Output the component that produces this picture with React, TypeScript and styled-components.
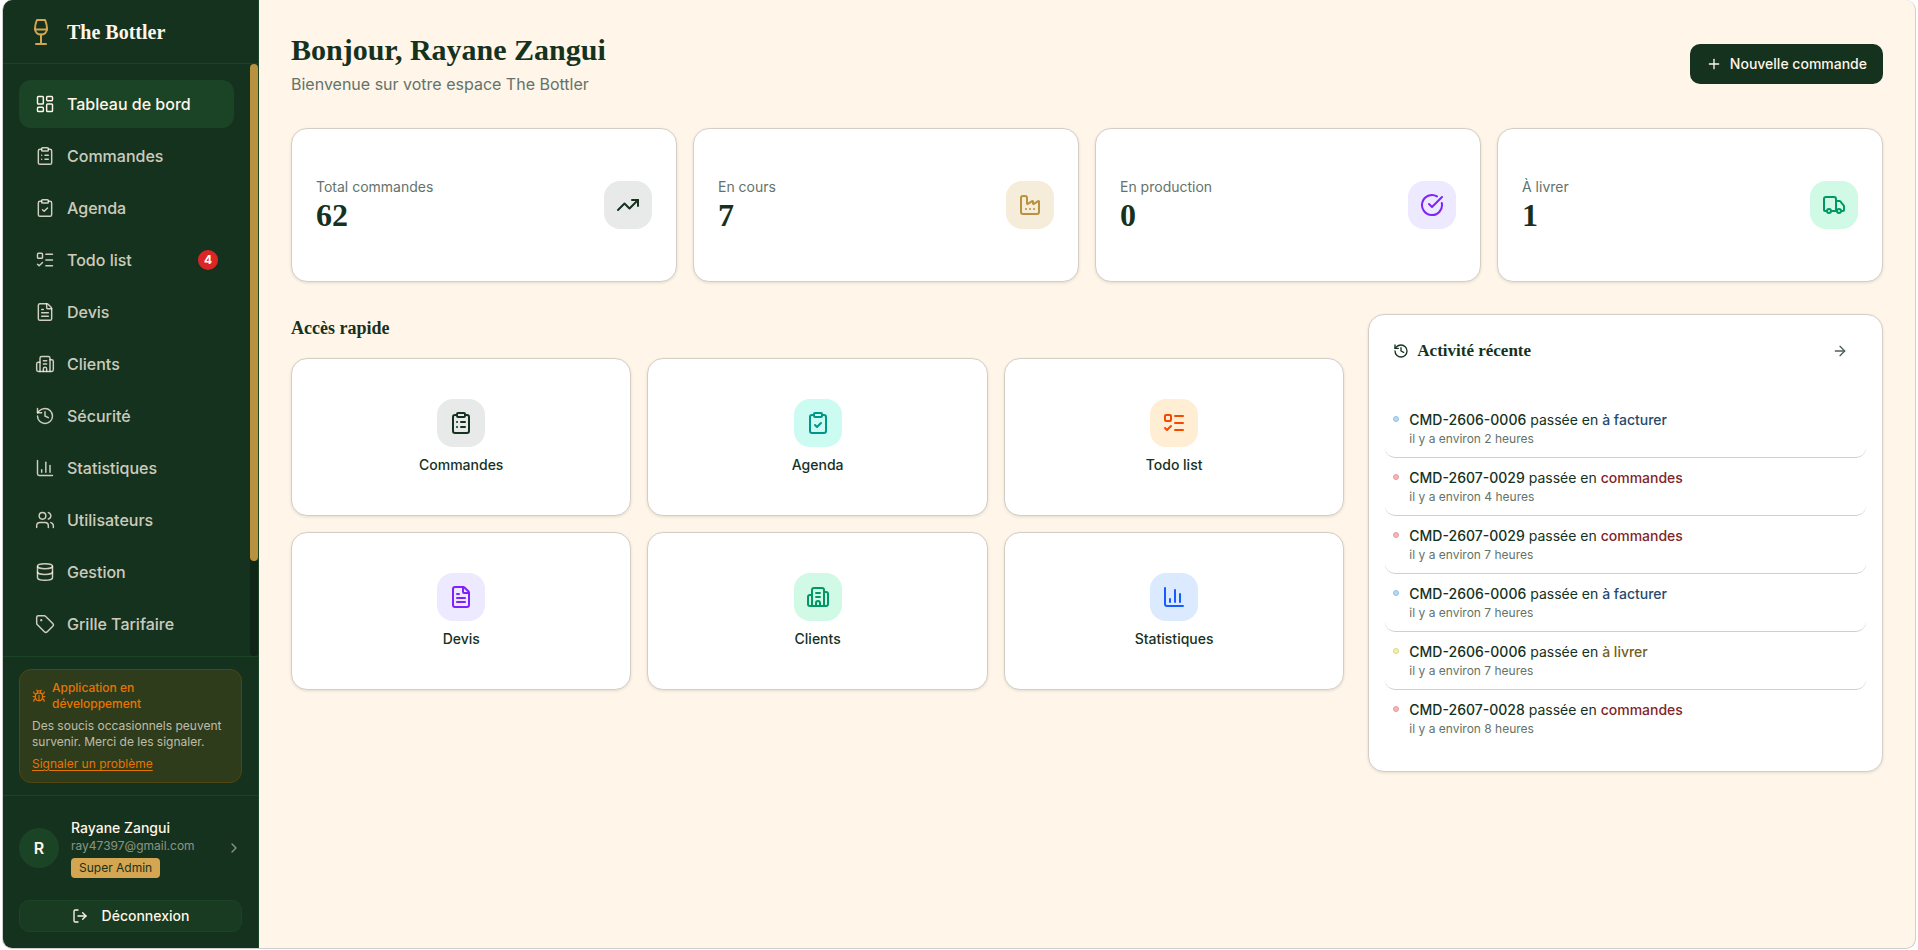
import React from "react";
import styled, { createGlobalStyle, ThemeProvider } from "styled-components";
import {
  ArrowRight,
  Bug,
  ChartColumn,
  ChevronRight,
  CircleCheckBig,
  ClipboardCheck,
  ClipboardList,
  Database,
  Factory,
  FileText,
  History,
  LayoutDashboard,
  ListTodo,
  LogOut,
  Plus,
  Tag,
  TrendingUp,
  Truck,
  Users,
  type LucideIcon,
} from "lucide-react";

const theme = {
  green: "#15321e",
  greenSoft: "#1b4426",
  cream: "#fff5e8",
  gold: "#b8923f",
  goldLight: "#d4a651",
  orange: "#e87400",
  muted: "#63736a",
  border: "#d3cfc7",
  sans: '"Inter", "Liberation Sans", sans-serif',
  serif: '"Liberation Serif", "Times New Roman", serif',
};

const GlobalStyle = createGlobalStyle`
  *, *::before, *::after { box-sizing: border-box; }
  body {
    margin: 0;
    background: #fff;
    color: ${theme.green};
    font-family: ${theme.sans};
    font-size: 14px;
    line-height: 20px;
  }
  h1, h2, p, ul { margin: 0; padding: 0; }
  ul { list-style: none; }
  a { color: inherit; text-decoration: none; }
  button { font: inherit; cursor: pointer; }
  svg { display: block; flex-shrink: 0; }
`;

const Frame = styled.div`
  display: flex;
  min-height: calc(100vh - 1px);
  margin: 0 2px 1px;
  border: 1px solid #cfcfcf;
  border-top: 0;
  border-radius: 10px;
  overflow: hidden;
  background: ${(p) => p.theme.cream};
`;

/* ---------- Sidebar ---------- */

const Sidebar = styled.aside`
  display: flex;
  flex-direction: column;
  flex: 0 0 256px;
  height: calc(100vh - 2px);
  border-right: 1px solid ${(p) => p.theme.greenSoft};
  background: ${(p) => p.theme.green};
  color: ${(p) => p.theme.cream};
`;

const Brand = styled.div`
  display: flex;
  align-items: center;
  gap: 12px;
  flex: 0 0 64px;
  padding: 0 24px;
  border-bottom: 1px solid ${(p) => p.theme.greenSoft};
  color: ${(p) => p.theme.goldLight};
`;

const BrandName = styled.span`
  color: ${(p) => p.theme.cream};
  font: 700 20px/28px ${(p) => p.theme.serif};
`;

const NavArea = styled.div`
  display: flex;
  flex: 1;
  min-height: 0;
`;

const Nav = styled.nav`
  flex: 1;
  padding: 16px;
  overflow: hidden;
`;

const NavList = styled.ul`
  display: flex;
  flex-direction: column;
  gap: 4px;
`;

const NavLink = styled.a<{ $active?: boolean }>`
  display: flex;
  align-items: center;
  gap: 12px;
  height: 48px;
  padding: 0 16px;
  border-radius: 12px;
  font-size: 16px;
  font-weight: 500;
  color: ${(p) => (p.$active ? p.theme.cream : "rgba(255, 245, 232, 0.8)")};
  background: ${(p) => (p.$active ? p.theme.greenSoft : "transparent")};
`;

const Count = styled.span`
  display: grid;
  place-items: center;
  width: 20px;
  height: 20px;
  margin-left: auto;
  border-radius: 50%;
  background: #dc2626;
  color: #fff;
  font-size: 12px;
  font-weight: 700;
`;

const ScrollTrack = styled.div`
  flex: 0 0 8px;
  border-radius: 4px;
  background: #0f2515;
`;

const ScrollThumb = styled.div`
  height: 84%;
  border-radius: 4px;
  background: ${(p) => p.theme.gold};
`;

const NoticeArea = styled.div`
  padding: 12px 16px;
  border-top: 1px solid ${(p) => p.theme.greenSoft};
`;

const Notice = styled.section`
  display: flex;
  flex-direction: column;
  align-items: flex-start;
  gap: 6px;
  padding: 10px 12px;
  border: 1px solid #50460f;
  border-radius: 12px;
  background: #2e3c1c;
  color: rgba(255, 245, 232, 0.7);
  font-size: 12px;
  line-height: 16px;
`;

const NoticeTitle = styled.p`
  display: flex;
  align-items: center;
  gap: 6px;
  color: ${(p) => p.theme.orange};
  font-weight: 500;
`;

const NoticeLink = styled.a`
  color: ${(p) => p.theme.orange};
  text-decoration: underline;
  text-underline-offset: 2px;
`;

const Account = styled.div`
  display: flex;
  flex-direction: column;
  gap: 22px;
  padding: 22px 16px 16px;
  border-top: 1px solid ${(p) => p.theme.greenSoft};
`;

const Profile = styled.a`
  display: flex;
  align-items: center;
  gap: 12px;
  color: rgba(255, 245, 232, 0.5);
`;

const Avatar = styled.span`
  display: grid;
  place-items: center;
  flex: 0 0 40px;
  height: 40px;
  border-radius: 50%;
  background: ${(p) => p.theme.greenSoft};
  color: ${(p) => p.theme.cream};
  font-size: 16px;
  font-weight: 600;
`;

const Identity = styled.span`
  display: flex;
  flex: 1;
  flex-direction: column;
  align-items: flex-start;
  min-width: 0;
`;

const PersonName = styled.span`
  color: ${(p) => p.theme.cream};
  font-weight: 500;
`;

const Email = styled.span`
  font-size: 12px;
  line-height: 16px;
`;

const Role = styled.span`
  margin-top: 4px;
  padding: 0 8px;
  border-radius: 4px;
  background: ${(p) => p.theme.goldLight};
  color: ${(p) => p.theme.green};
  font-size: 12px;
`;

const LogoutButton = styled.button`
  display: flex;
  align-items: center;
  justify-content: center;
  gap: 14px;
  height: 32px;
  border: 1px solid ${(p) => p.theme.greenSoft};
  border-radius: 10px;
  background: #183b22;
  color: ${(p) => p.theme.cream};
  font-weight: 500;
`;

/* ---------- Main ---------- */

const Main = styled.main`
  display: flex;
  flex: 1;
  flex-direction: column;
  gap: 32px;
  min-width: 0;
  padding: 32px;
`;

const PageHeader = styled.header`
  display: flex;
  align-items: center;
  justify-content: space-between;
`;

const PageTitle = styled.h1`
  font: 700 30px/36px ${(p) => p.theme.serif};
`;

const Subtitle = styled.p`
  margin-top: 4px;
  color: ${(p) => p.theme.muted};
  font-size: 16px;
  line-height: 24px;
`;

const PrimaryButton = styled.button`
  display: flex;
  align-items: center;
  gap: 8px;
  height: 40px;
  padding: 0 16px;
  border: 0;
  border-radius: 10px;
  background: ${(p) => p.theme.green};
  color: ${(p) => p.theme.cream};
  font-weight: 500;
`;

const Card = styled.div`
  border: 1px solid ${(p) => p.theme.border};
  border-radius: 16px;
  background: #fff;
  box-shadow: 0 1px 3px rgba(21, 50, 30, 0.12);
`;

const StatGrid = styled.section`
  display: grid;
  grid-template-columns: repeat(4, 1fr);
  gap: 16px;
`;

const StatCard = styled(Card)`
  display: flex;
  align-items: center;
  justify-content: space-between;
  height: 154px;
  padding: 0 24px;
`;

const StatLabel = styled.p`
  color: ${(p) => p.theme.muted};
`;

const StatValue = styled.p`
  font: 700 32px/36px ${(p) => p.theme.serif};
`;

const IconTile = styled.span<{ $bg: string; $fg: string }>`
  display: grid;
  place-items: center;
  width: 48px;
  height: 48px;
  border-radius: 16px;
  background: ${(p) => p.$bg};
  color: ${(p) => p.$fg};
`;

const Columns = styled.div`
  display: grid;
  grid-template-columns: repeat(3, 1fr);
  align-items: start;
  gap: 24px;
`;

const QuickAccess = styled.section`
  display: flex;
  grid-column: span 2;
  flex-direction: column;
  gap: 16px;
`;

const SectionTitle = styled.h2`
  font: 700 18px/28px ${(p) => p.theme.serif};
`;

const ShortcutGrid = styled.div`
  display: grid;
  grid-template-columns: repeat(3, 1fr);
  gap: 16px;
`;

const Shortcut = styled(Card).attrs({ as: "a" })<{ href: string }>`
  display: flex;
  flex-direction: column;
  align-items: center;
  justify-content: center;
  gap: 8px;
  height: 158px;
  font-weight: 500;
`;

const ActivityHeader = styled.header`
  display: flex;
  align-items: center;
  gap: 8px;
  padding: 20px 24px;
`;

const ActivityTitle = styled.h2`
  flex: 1;
  font: 700 17px/24px ${(p) => p.theme.serif};
`;

const IconButton = styled.button`
  display: grid;
  place-items: center;
  width: 36px;
  height: 32px;
  padding: 0;
  border: 0;
  background: none;
  color: #4c6153;
`;

const ActivityList = styled.ul`
  padding: 13px 16px 24px;
`;

const ActivityItem = styled.li`
  display: flex;
  gap: 10px;
  padding: 10px 8px;
  border-radius: 10px;

  &:not(:last-child) {
    border-bottom: 1px solid ${(p) => p.theme.border};
  }
`;

const Dot = styled.span<{ $fill: string; $line: string }>`
  width: 6px;
  height: 6px;
  margin-top: 6px;
  border: 1px solid ${(p) => p.$line};
  border-radius: 50%;
  background: ${(p) => p.$fill};
`;

const ActivityText = styled.p`
  line-height: 19px;
`;

const Reference = styled.span`
  font-weight: 500;
`;

const Status = styled.span<{ $color: string }>`
  color: ${(p) => p.$color};
  font-weight: 500;
`;

const Time = styled.p`
  margin-top: 2px;
  color: ${(p) => p.theme.muted};
  font-size: 12px;
  line-height: 16px;
`;

/* ---------- Icons ---------- */

const GlassLogo = () => (
  <svg width="28" height="28" viewBox="0 0 28 28" fill="none" stroke="currentColor" strokeWidth="2" strokeLinecap="round" strokeLinejoin="round" aria-hidden="true">
    <path d="M9.900 2h8.200C19.300 5 20 8 20 10.600c0 3.700-2.500 6-6 6s-6-2.300-6-6C8 8 8.700 5 9.900 2Z" />
    <path d="M8 11.500h12M14 16.600V26M9 26h10" />
  </svg>
);

const ClientsIcon = ({ size = 24, strokeWidth = 2 }: { size?: number; strokeWidth?: number }) => (
  <svg width={size} height={size} viewBox="0 0 24 24" fill="none" stroke="currentColor" strokeWidth={strokeWidth} strokeLinecap="round" strokeLinejoin="round" aria-hidden="true">
    <path d="M10 12h4M10 8h4M14 21v-3a2 2 0 0 0-4 0v3" />
    <path d="M6 10H4a2 2 0 0 0-2 2v7a2 2 0 0 0 2 2h16a2 2 0 0 0 2-2V9a2 2 0 0 0-2-2h-2" />
    <path d="M6 21V5a2 2 0 0 1 2-2h8a2 2 0 0 1 2 2v16" />
  </svg>
);

/* ---------- Data ---------- */

type Icon = LucideIcon | typeof ClientsIcon;

const navItems: { label: string; icon: Icon; active?: boolean; count?: number }[] = [
  { label: "Tableau de bord", icon: LayoutDashboard, active: true },
  { label: "Commandes", icon: ClipboardList },
  { label: "Agenda", icon: ClipboardCheck },
  { label: "Todo list", icon: ListTodo, count: 4 },
  { label: "Devis", icon: FileText },
  { label: "Clients", icon: ClientsIcon },
  { label: "Sécurité", icon: History },
  { label: "Statistiques", icon: ChartColumn },
  { label: "Utilisateurs", icon: Users },
  { label: "Gestion", icon: Database },
  { label: "Grille Tarifaire", icon: Tag },
];

const stats: { label: string; value: number; icon: Icon; bg: string; fg: string }[] = [
  { label: "Total commandes", value: 62, icon: TrendingUp, bg: "#e8eae9", fg: "#15321e" },
  { label: "En cours", value: 7, icon: Factory, bg: "#f5ecda", fg: "#b8923f" },
  { label: "En production", value: 0, icon: CircleCheckBig, bg: "#ede9fe", fg: "#7f22fe" },
  { label: "À livrer", value: 1, icon: Truck, bg: "#d0fae5", fg: "#009966" },
];

const shortcuts: { label: string; icon: Icon; bg: string; fg: string }[] = [
  { label: "Commandes", icon: ClipboardList, bg: "#e8eae9", fg: "#15321e" },
  { label: "Agenda", icon: ClipboardCheck, bg: "#cbfbf1", fg: "#009689" },
  { label: "Todo list", icon: ListTodo, bg: "#ffedd4", fg: "#f54900" },
  { label: "Devis", icon: FileText, bg: "#ede9fe", fg: "#7f22fe" },
  { label: "Clients", icon: ClientsIcon, bg: "#d0fae5", fg: "#009966" },
  { label: "Statistiques", icon: ChartColumn, bg: "#dbeafe", fg: "#155dfc" },
];

const statuses = {
  "à facturer": { fill: "#b5daf5", line: "#93c0e4", color: "#264b6e" },
  commandes: { fill: "#f8b4b6", line: "#e99a9d", color: "#7f262a" },
  "à livrer": { fill: "#f7f1a8", line: "#ded585", color: "#75601d" },
};

const activities: { order: string; status: keyof typeof statuses; hours: number }[] = [
  { order: "CMD-2606-0006", status: "à facturer", hours: 2 },
  { order: "CMD-2607-0029", status: "commandes", hours: 4 },
  { order: "CMD-2607-0029", status: "commandes", hours: 7 },
  { order: "CMD-2606-0006", status: "à facturer", hours: 7 },
  { order: "CMD-2606-0006", status: "à livrer", hours: 7 },
  { order: "CMD-2607-0028", status: "commandes", hours: 8 },
];

export default function App() {
  return (
    <ThemeProvider theme={theme}>
      <GlobalStyle />
      <Frame>
        <Sidebar>
          <Brand>
            <GlassLogo />
            <BrandName>The Bottler</BrandName>
          </Brand>
          <NavArea>
            <Nav>
              <NavList>
                {navItems.map(({ label, icon: Glyph, active, count }) => (
                  <li key={label}>
                    <NavLink href="#" $active={active} aria-current={active ? "page" : undefined}>
                      <Glyph size={20} strokeWidth={1.75} />
                      {label}
                      {count && <Count>{count}</Count>}
                    </NavLink>
                  </li>
                ))}
              </NavList>
            </Nav>
            <ScrollTrack>
              <ScrollThumb />
            </ScrollTrack>
          </NavArea>
          <NoticeArea>
            <Notice>
              <NoticeTitle>
                <Bug size={14} />
                <span>
                  Application en
                  <br />
                  développement
                </span>
              </NoticeTitle>
              <p>
                Des soucis occasionnels peuvent survenir. Merci de les signaler.
              </p>
              <NoticeLink href="#">Signaler un problème</NoticeLink>
            </Notice>
          </NoticeArea>
          <Account>
            <Profile href="#">
              <Avatar>R</Avatar>
              <Identity>
                <PersonName>Rayane Zangui</PersonName>
                <Email>ray47397@gmail.com</Email>
                <Role>Super Admin</Role>
              </Identity>
              <ChevronRight size={16} />
            </Profile>
            <LogoutButton type="button">
              <LogOut size={16} />
              Déconnexion
            </LogoutButton>
          </Account>
        </Sidebar>

        <Main>
          <PageHeader>
            <div>
              <PageTitle>Bonjour, Rayane Zangui</PageTitle>
              <Subtitle>Bienvenue sur votre espace The Bottler</Subtitle>
            </div>
            <PrimaryButton type="button">
              <Plus size={16} />
              Nouvelle commande
            </PrimaryButton>
          </PageHeader>

          <StatGrid>
            {stats.map(({ label, value, icon: Glyph, bg, fg }) => (
              <StatCard key={label}>
                <div>
                  <StatLabel>{label}</StatLabel>
                  <StatValue>{value}</StatValue>
                </div>
                <IconTile $bg={bg} $fg={fg}>
                  <Glyph size={24} />
                </IconTile>
              </StatCard>
            ))}
          </StatGrid>

          <Columns>
            <QuickAccess>
              <SectionTitle>Accès rapide</SectionTitle>
              <ShortcutGrid>
                {shortcuts.map(({ label, icon: Glyph, bg, fg }) => (
                  <Shortcut key={label} href="#">
                    <IconTile $bg={bg} $fg={fg}>
                      <Glyph size={24} />
                    </IconTile>
                    {label}
                  </Shortcut>
                ))}
              </ShortcutGrid>
            </QuickAccess>

            <Card>
              <ActivityHeader>
                <History size={16} />
                <ActivityTitle>Activité récente</ActivityTitle>
                <IconButton type="button" aria-label="Voir toute l’activité">
                  <ArrowRight size={16} />
                </IconButton>
              </ActivityHeader>
              <ActivityList>
                {activities.map(({ order, status, hours }, i) => {
                  const { fill, line, color } = statuses[status];
                  return (
                    <ActivityItem key={i}>
                      <Dot $fill={fill} $line={line} />
                      <div>
                        <ActivityText>
                          <Reference>{order}</Reference> passée en <Status $color={color}>{status}</Status>
                        </ActivityText>
                        <Time>il y a environ {hours} heures</Time>
                      </div>
                    </ActivityItem>
                  );
                })}
              </ActivityList>
            </Card>
          </Columns>
        </Main>
      </Frame>
    </ThemeProvider>
  );
}
